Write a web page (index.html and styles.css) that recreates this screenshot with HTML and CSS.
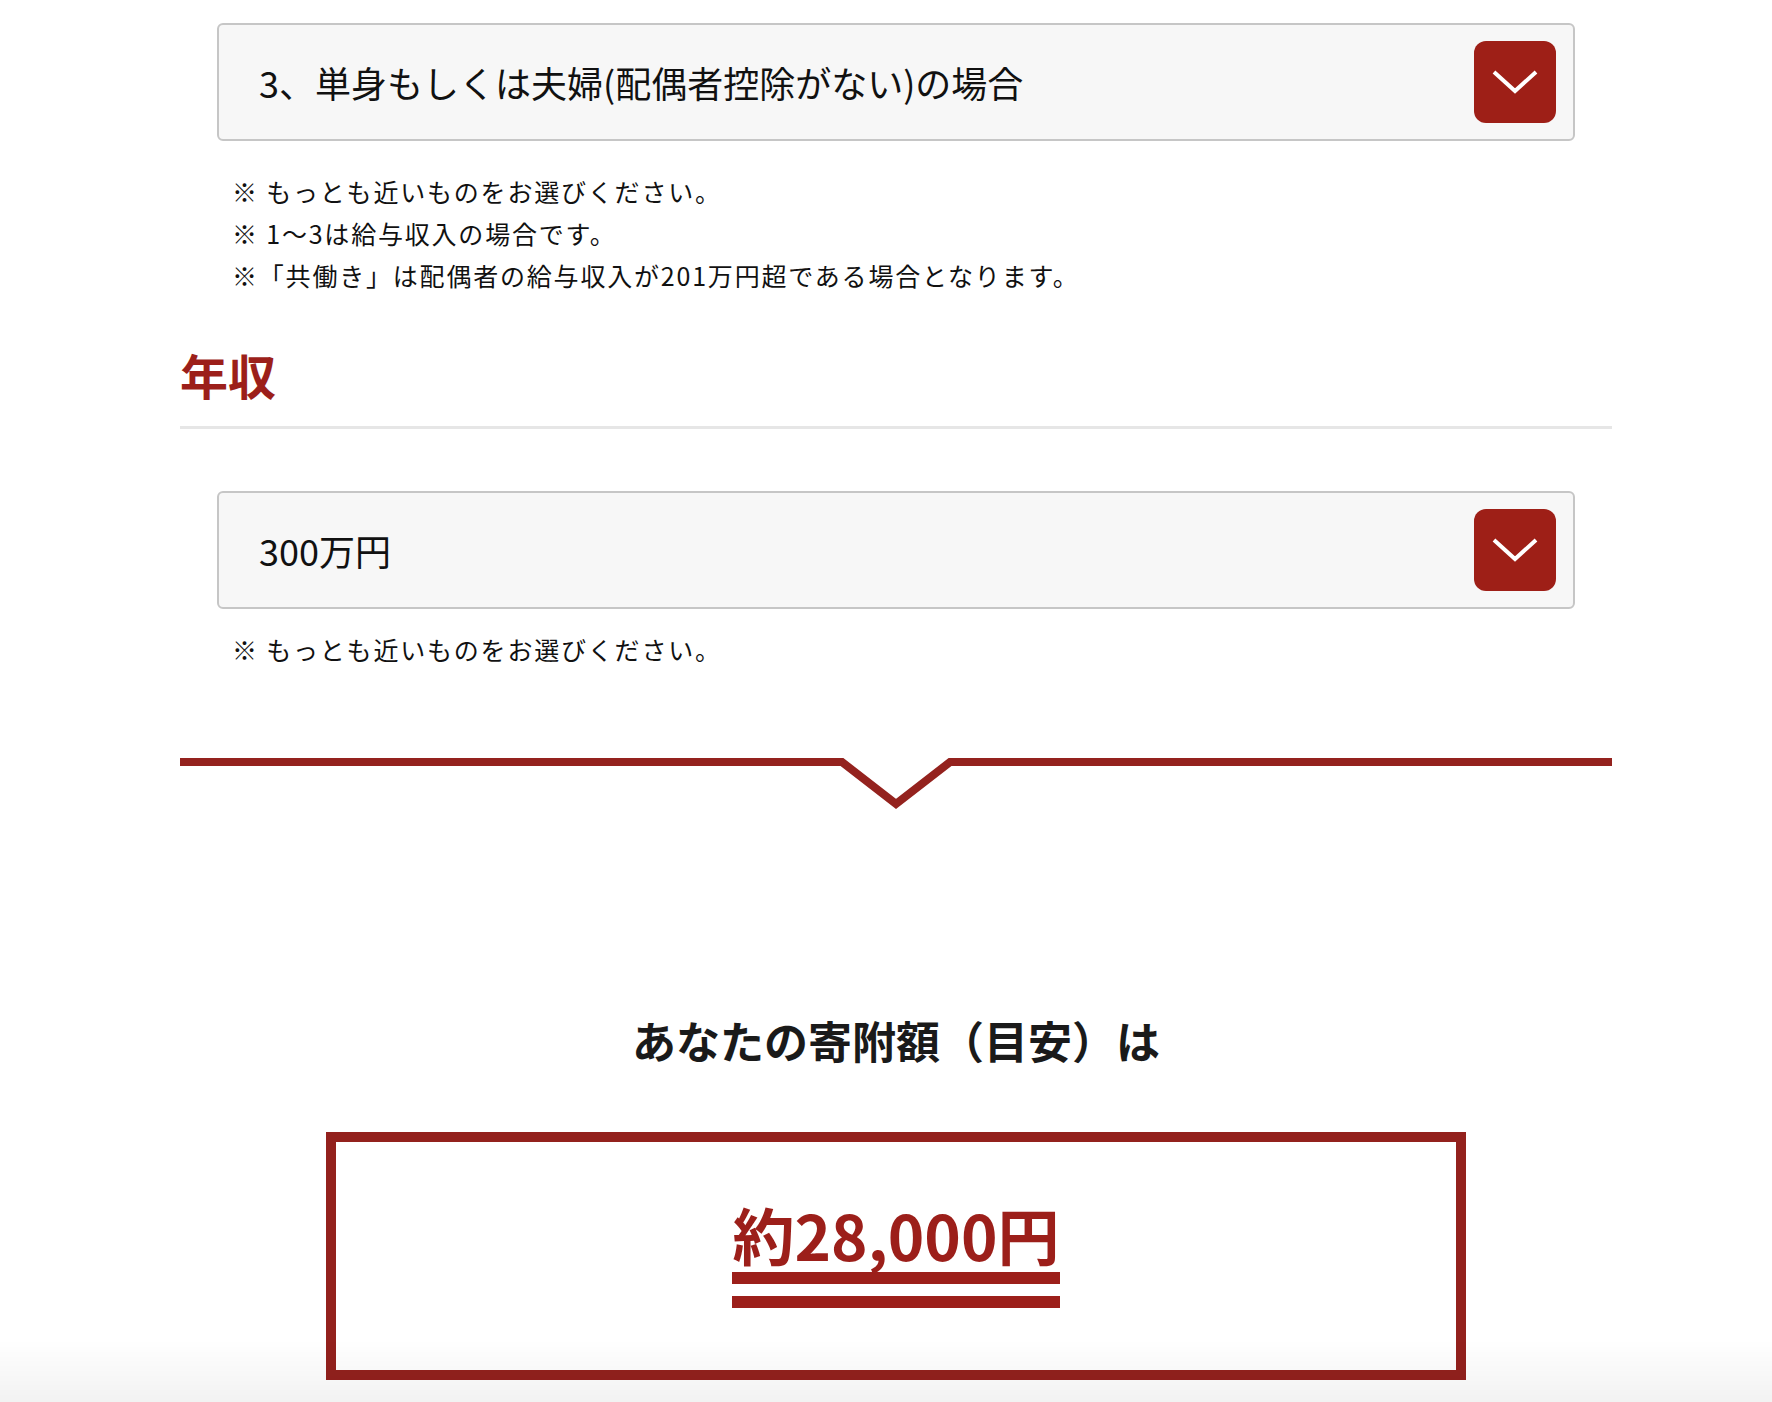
FILE: index.html
```html
<!DOCTYPE html>
<html lang="ja">
<head>
    <meta charset="UTF-8">
    <meta name="viewport" content="width=device-width, initial-scale=1.0">
    <title>寄附額シミュレーション</title>
    <link rel="stylesheet" href="styles.css">
</head>
<body>
    <main class="calc">

        <!-- 家族構成 -->
        <div class="field">
            <div class="select">
                <span class="select-value">3、単身もしくは夫婦(配偶者控除がない)の場合</span>
                <span class="select-btn">
                    <svg width="46" height="24" viewBox="0 0 46 24"><polyline points="2,2 23,21 44,2" fill="none" stroke="#fff" stroke-width="4"/></svg>
                </span>
            </div>
            <ul class="notes">
                <li>※ もっとも近いものをお選びください。</li>
                <li>※ 1〜3は給与収入の場合です。</li>
                <li>※「共働き」は配偶者の給与収入が201万円超である場合となります。</li>
            </ul>
        </div>

        <!-- 年収 -->
        <h2 class="section-title">年収</h2>
        <div class="field field--income">
            <div class="select">
                <span class="select-value">300万円</span>
                <span class="select-btn">
                    <svg width="46" height="24" viewBox="0 0 46 24"><polyline points="2,2 23,21 44,2" fill="none" stroke="#fff" stroke-width="4"/></svg>
                </span>
            </div>
            <ul class="notes notes--single">
                <li>※ もっとも近いものをお選びください。</li>
            </ul>
        </div>

        <div class="divider">
            <svg width="100%" height="56" viewBox="0 0 1432 56" preserveAspectRatio="none"><polyline points="0,4 662,4 716,46 770,4 1432,4" fill="none" stroke="#94221e" stroke-width="8"/></svg>
        </div>

        <!-- 結果 -->
        <section class="result">
            <h3 class="result-title">あなたの寄附額（目安）は</h3>
            <div class="result-box">
                <span class="result-amount">約28,000円</span>
            </div>
        </section>
    </main>

    <div class="page-shade"></div>
</body>
</html>
```

FILE: styles.css
```css
body {
    margin: 0;
    font-family: "Noto Sans CJK JP", "Noto Sans", sans-serif;
    color: #111;
    background: #fff;
}
.calc {
    margin: 0 160px 0 180px;
    padding: 23px 0 80px;
}
.field {
    padding: 0 37px;
}
.field--income {
    margin-top: 62px;
}

/* セレクト */
.select {
    display: flex;
    align-items: center;
    justify-content: space-between;
    height: 118px;
    box-sizing: border-box;
    padding: 0 17px 0 40px;
    border: 2px solid #c6c6c6;
    border-radius: 6px;
    background-color: #f7f7f7;
}
.select-value {
    font-size: 36px;
    color: #111;
}
.select-btn {
    display: flex;
    align-items: center;
    justify-content: center;
    width: 82px;
    height: 82px;
    border-radius: 12px;
    background-color: #9e1f17;
}
.select-btn svg {
    display: block;
}

/* 注意書き */
.notes {
    list-style: none;
    margin: 29px 0 0;
    padding: 0 0 0 15px;
    font-size: 25px;
    line-height: 42px;
    letter-spacing: 1.8px;
}
.notes--single {
    margin-top: 19px;
}

.section-title {
    margin: 45px 0 0;
    padding-bottom: 18px;
    border-bottom: 3px solid #e6e6e6;
    font-size: 48px;
    line-height: 67px;
    font-weight: bold;
    color: #9c1f1a;
}

.divider {
    margin-top: 88px;
}
.divider svg {
    display: block;
}

/* 結果 */
.result-title {
    margin: 196px 0 0;
    text-align: center;
    font-size: 44px;
    line-height: 1.4;
    font-weight: bold;
    color: #1a1a1a;
}
.result-box {
    display: flex;
    align-items: center;
    justify-content: center;
    width: 1140px;
    height: 248px;
    box-sizing: border-box;
    margin: 60px auto 0;
    padding-bottom: 6px;
    border: 10px solid #93211d;
}
.result-amount {
    display: inline-block;
    font-size: 62px;
    line-height: 1.2;
    font-weight: bold;
    color: #9c1f1a;
    border-bottom: 36px double #9c1f1a;
}

.page-shade {
    position: fixed;
    left: 0;
    right: 0;
    bottom: 0;
    height: 62px;
    background: linear-gradient(rgba(0, 0, 0, 0), rgba(0, 0, 0, 0.05));
    pointer-events: none;
}
```
